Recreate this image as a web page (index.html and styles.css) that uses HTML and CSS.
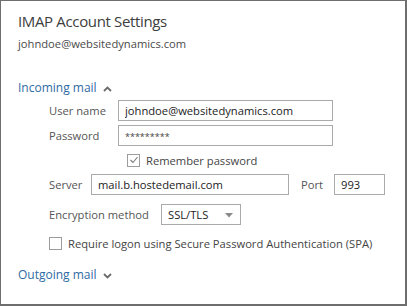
FILE: index.html
```html
<!DOCTYPE html>
<html>
<head>
<meta charset="utf-8">
<link rel="stylesheet" href="styles.css">
</head>
<body>
<div class="window">
  <header class="head">
    <h1 class="title">IMAP Account Settings</h1>
    <p class="account">johndoe@websitedynamics.com</p>
  </header>
  <section class="group">
    <div class="group-head">Incoming mail
      <svg class="chev" width="9" height="6" viewBox="0 0 9 6"><polyline points="1,5 4.5,1.5 8,5" fill="none" stroke="#6b6b6b" stroke-width="1.8"/></svg>
    </div>
    <div class="form">
      <div class="row r-user">
        <label class="lbl lbl-a">User name</label>
        <input class="field f-wide" type="text" value="johndoe@websitedynamics.com">
      </div>
      <div class="row r-pw">
        <label class="lbl lbl-a">Password</label>
        <div class="field f-wide pw">*********</div>
      </div>
      <div class="row check-row r-remember">
        <span class="box"><svg width="10" height="10" viewBox="0 0 10 10"><polyline points="1.5,5 4,7.5 8.5,2" fill="none" stroke="#7a7a7a" stroke-width="1.1"/></svg></span>
        <span class="check-text">Remember password</span>
      </div>
      <div class="row r-server">
        <label class="lbl lbl-s">Server</label>
        <input class="field f-server" type="text" value="mail.b.hostedemail.com">
        <label class="lbl lbl-p">Port</label>
        <input class="field f-port" type="text" value="993">
      </div>
      <div class="row r-enc">
        <label class="lbl lbl-e">Encryption method</label>
        <div class="field f-select">SSL/TLS
          <svg class="caret" width="8" height="5" viewBox="0 0 8 5"><polygon points="0,0 8,0 4,4.5" fill="#8a8a8a"/></svg>
        </div>
      </div>
      <div class="row check-row r-spa">
        <span class="box"></span>
        <span class="check-text">Require logon using Secure Password Authentication (SPA)</span>
      </div>
    </div>
  </section>
  <section class="group group-out">
    <div class="group-head">Outgoing mail
      <svg class="chev" width="9" height="6" viewBox="0 0 9 6"><polyline points="1,1 4.5,4.5 8,1" fill="none" stroke="#6b6b6b" stroke-width="1.8"/></svg>
    </div>
  </section>
</div>
</body>
</html>
```
FILE: styles.css
```css
* { box-sizing: border-box; }
html, body { margin: 0; padding: 0; background: #fff; }
body {
  font-family: "Open Sans", "Noto Sans", sans-serif;
  color: #444;
}
.window {
  width: 407px;
  height: 306px;
  border-style: solid;
  border-color: #6e6e6e;
  border-width: 1px 2px 2px 1px;
  padding: 9px 0 0 17px;
  overflow: hidden;
}
.title {
  margin: 0;
  font-weight: 400;
  font-size: 15px;
  letter-spacing: -0.35px;
  line-height: 22px;
  color: #3d3d3d;
}
.account {
  margin: 4px 0 0;
  font-size: 11.2px;
  line-height: 16px;
  color: #4a4a4a;
}
.group-head {
  margin-top: 27px;
  font-size: 12px;
  line-height: 18px;
  color: #2f6aa3;
  display: flex;
  align-items: center;
}
.group-out .group-head { margin-top: 15px; }
.chev { margin-left: 6px; margin-top: 1px; }
.form {
  padding-left: 31px;
  padding-top: 3px;
  font-size: 11.2px;
}
.row {
  display: flex;
  align-items: center;
  height: 21px;
}
.r-pw { margin-top: 4px; }
.r-remember { margin-top: 6px; margin-left: 78px; }
.r-server { margin-top: 6px; }
.r-enc { margin-top: 9px; }
.r-spa { margin-top: 10px; }
.lbl { color: #555; flex: none; }
.lbl-a { width: 69px; }
.lbl-s { width: 42px; }
.lbl-p { width: 33px; margin-left: 12px; }
.lbl-e { width: 112px; }
.field {
  height: 21px;
  border: 1px solid #aaaaaa;
  background: #fff;
  font: inherit;
  color: #222;
  padding: 0 6px;
  margin: 0;
  outline: none;
  display: flex;
  align-items: center;
  flex: none;
}
.f-wide { width: 215px; }
.pw { font-size: 9px; color: #444; padding-top: 2px; }
.f-server { width: 198px; }
.f-port { width: 51px; }
.f-select { width: 80px; position: relative; }
.caret { position: absolute; right: 7px; top: 8px; }
.check-row { height: 16px; }
.box {
  width: 13px;
  height: 13px;
  border: 1px solid #9c9c9c;
  display: flex;
  align-items: center;
  justify-content: center;
  flex: none;
  margin-right: 6px;
}
.check-text { color: #444; }
```
